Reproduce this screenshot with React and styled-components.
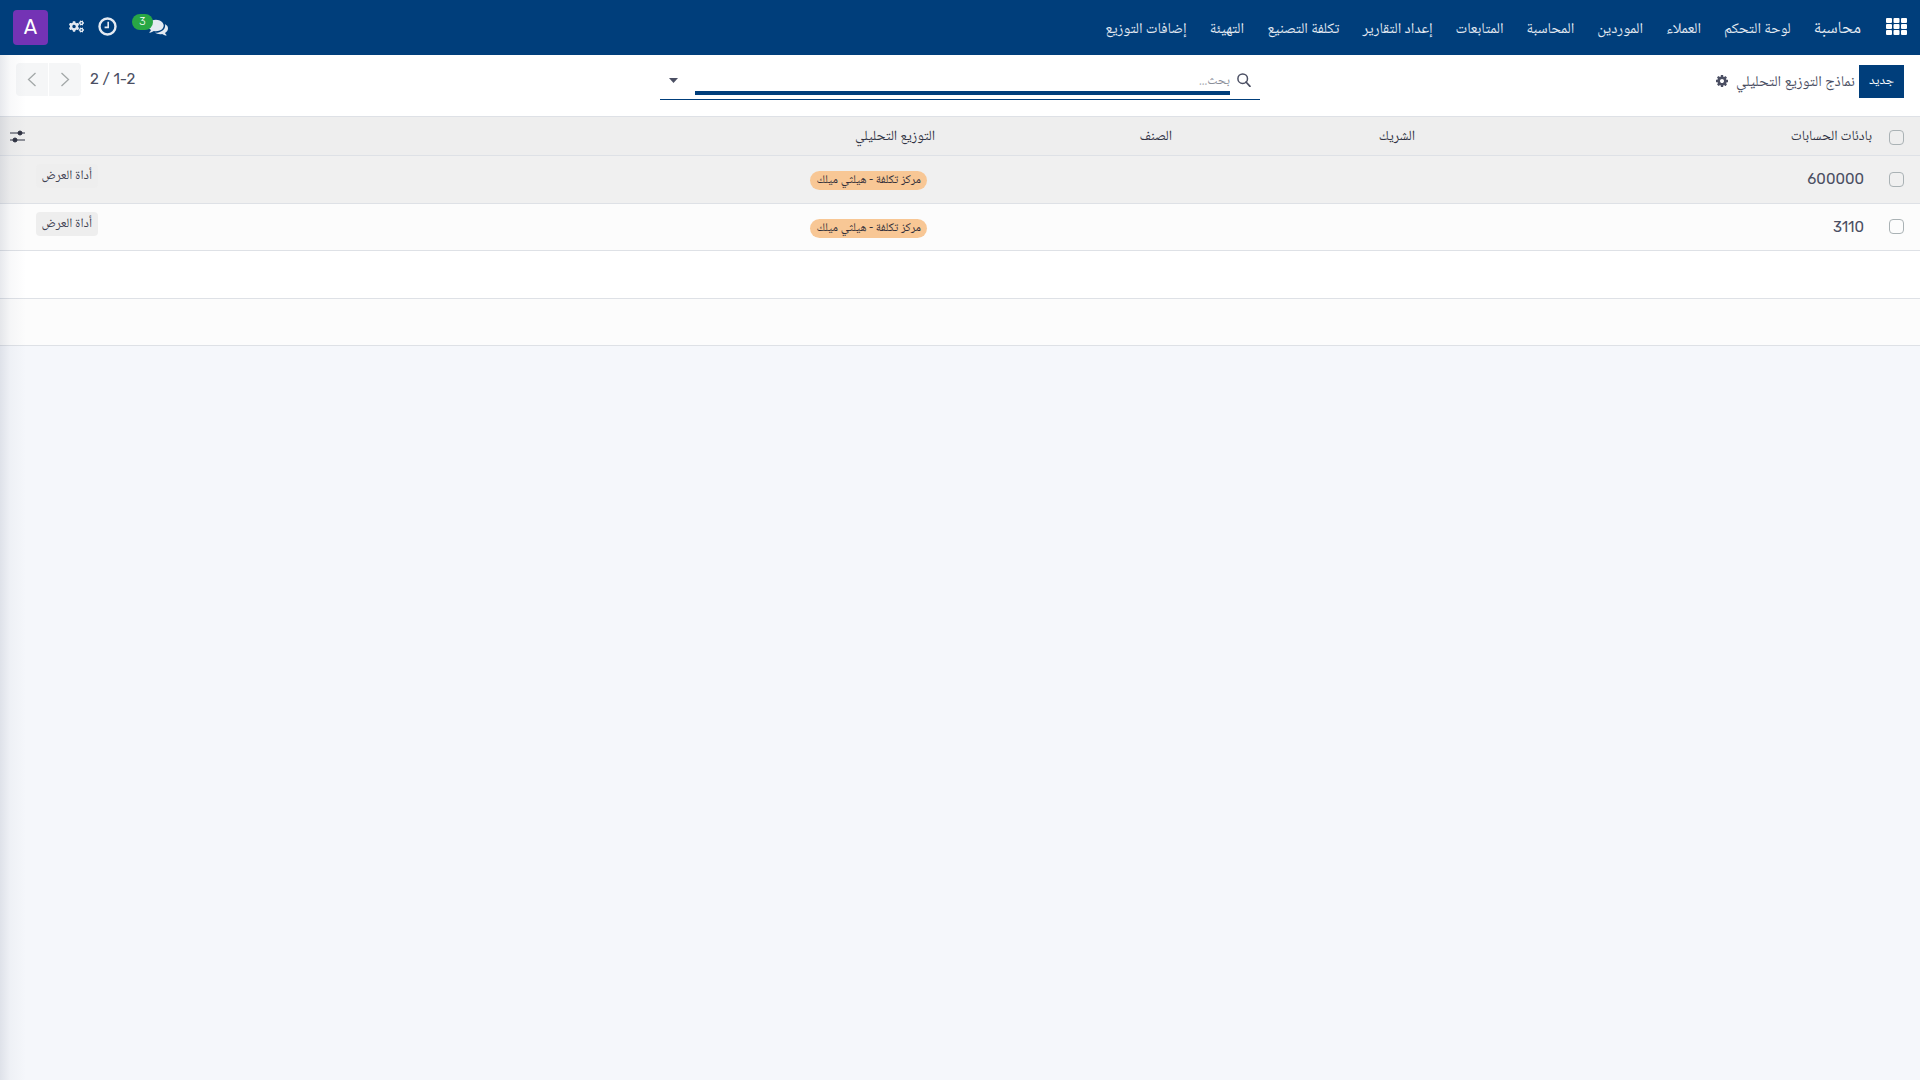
import React from "react";
import styled, { createGlobalStyle } from "styled-components";
import { FaCogs } from "react-icons/fa";

const arabic = `"Noto Naskh Arabic", "DejaVu Sans", sans-serif`;
const latin = `Rubik, Roboto, sans-serif`;
const navy = "#003e7b";
const ink = "#4b4f63";
const line = "#dee1e6";

const GlobalStyle = createGlobalStyle`
  *, *::before, *::after { box-sizing: border-box; }
  body { margin: 0; background: #f5f7fb; color: ${ink}; font-family: ${arabic}; font-size: 15px; line-height: 24px; }
  button, input { font: inherit; color: inherit; }
`;

const Page = styled.div`
  min-height: 100vh;
  display: flex;
  flex-direction: column;
`;

const Navbar = styled.header`
  display: flex;
  align-items: center;
  height: 55px;
  padding: 0 13px;
  background: ${navy};
  color: #e4eaf2;
`;

const IconButton = styled.button`
  display: flex;
  align-items: center;
  justify-content: center;
  padding: 0;
  border: 0;
  background: none;
  color: inherit;
  cursor: pointer;
`;

const AppsButton = styled(IconButton)`
  padding-bottom: 3px;
`;

const Menu = styled.nav`
  display: flex;
  align-items: center;
  gap: 23px;
  padding-top: 4px;
  margin-inline-start: 25px;
`;

const MenuLink = styled.a`
  color: inherit;
  text-decoration: none;
  white-space: nowrap;
  font-size: ${(p) => (p.$brand ? 17 : 15)}px;
  line-height: 24px;
`;

const Systray = styled.div`
  display: flex;
  align-items: center;
  margin-inline-start: auto;
`;

const Tray = styled.div`
  display: flex;
  align-items: center;
  gap: 14px;
  height: 35px;
  padding-bottom: 2px;
  margin-inline-end: 21px;
`;

const Messages = styled(IconButton)`
  position: relative;
  margin-inline-end: 17px;
`;

const Badge = styled.span`
  position: absolute;
  top: -3px;
  left: -16px;
  width: 21px;
  height: 16px;
  border-radius: 8px;
  background: #28a745;
  color: #fff;
  font: 300 11px/15px ${latin};
  text-align: center;
`;

const Avatar = styled.button`
  width: 35px;
  height: 35px;
  padding: 0;
  border: 0;
  border-radius: 4px;
  background: #7433b5;
  color: #fff;
  font: 400 20px/35px ${latin};
`;

const ControlPanel = styled.section`
  display: grid;
  grid-template-columns: 1fr 600px 1fr;
  align-items: start;
  height: 62px;
  padding: 8px 16px 0;
  background: #fff;
  border-bottom: 1px solid ${line};
`;

const Crumbs = styled.div`
  display: flex;
  align-items: center;
  gap: 4px;
  padding-top: 2px;
`;

const NewButton = styled.button`
  height: 33px;
  padding: 0 10px;
  border: 0;
  background: ${navy};
  color: #fff;
  font-size: 13px;
  line-height: 33px;
`;

const Title = styled.h1`
  margin: 0;
  padding-top: 3px;
  font-size: 15px;
  font-weight: 400;
  line-height: 30px;
`;

const Gear = styled(IconButton)`
  margin-inline-start: 3px;
  padding-bottom: 2px;
`;

const Search = styled.div`
  display: flex;
  align-items: flex-start;
  height: 37px;
  padding: 8px 9px 0;
  border-bottom: 1px solid ${navy};
`;

const SearchAction = styled(IconButton)`
  height: 18px;
`;

const SearchInput = styled.input`
  flex: 1;
  height: 24px;
  min-width: 0;
  margin-inline: 7px 17px;
  padding: 0;
  border: 0;
  border-bottom: 4px solid ${navy};
  border-radius: 0;
  outline: 0;
  background: none;
  font-size: 13px;
  line-height: 20px;
  &::placeholder { color: #8b8f99; opacity: 1; }
`;

const Pager = styled.div`
  display: flex;
  align-items: flex-start;
  justify-self: end;
  direction: ltr;
`;

const PagerButton = styled.button`
  display: flex;
  align-items: center;
  justify-content: center;
  width: 33px;
  height: 33px;
  padding: 0;
  border: 0;
  border-inline-end: 1px solid #fff;
  border-radius: ${(p) => (p.$last ? "0 4px 4px 0" : "4px 0 0 4px")};
  background: #f5f6f7;
  color: #a3a8a8;
`;

const Range = styled.span`
  padding-inline-start: 8px;
  font: 400 15px/32px ${latin};
`;

const Table = styled.table`
  width: 100%;
  table-layout: fixed;
  border-collapse: collapse;
  background: #fff;
`;

const Col = styled.col`
  width: ${(p) => p.$w};
`;

const Th = styled.th`
  height: 38px;
  padding: 3px 8px 0;
  border-bottom: 1px solid ${line};
  background: #eee;
  color: #2f3242;
  font-size: 14px;
  font-weight: 400;
  line-height: 24px;
  text-align: start;
`;

const TickTh = styled(Th)`
  padding: 3px 16px 0 8px;
`;

const OptionsTh = styled(Th)`
  padding: 2px 8px 0 10px;
`;

const OptionsButton = styled(IconButton)`
  margin-inline-start: auto;
`;

const Row = styled.tr`
  height: ${(p) => (p.$tall ? 48 : 47)}px;
  background: ${(p) => p.$bg};
  border-bottom: 1px solid ${line};
`;

const Td = styled.td`
  padding: 0 16px;
  font: 400 15px/24px ${latin};
  vertical-align: middle;
`;

const TickCell = styled(Td)`
  padding: 0 16px 0 8px;
`;

const ToolCell = styled(Td)`
  padding: 8px 8px 0 0;
  vertical-align: top;
`;

const Tick = styled.input`
  appearance: none;
  display: block;
  width: 15px;
  height: 15px;
  margin: 0;
  border: 1px solid #aab2b5;
  border-radius: 4px;
  background: transparent;
`;

const Tag = styled.span`
  display: block;
  width: fit-content;
  margin-top: 3px;
  padding: 0 6px;
  border-radius: 10px;
  background: #f8c795;
  color: #33303a;
  font: 12px/19px ${arabic};
  white-space: nowrap;
`;

const ViewButton = styled.button`
  display: block;
  height: 24px;
  padding: 0 6px;
  border: 0;
  border-radius: 4px;
  background: #eee;
  color: #3f4252;
  font: 13px/24px ${arabic};
  white-space: nowrap;
`;

const EdgeShade = styled.div`
  position: absolute;
  top: 55px;
  bottom: 0;
  left: 0;
  width: 26px;
  background: linear-gradient(to right, rgba(40, 55, 90, 0.11), rgba(40, 55, 90, 0.03) 40%, rgba(40, 55, 90, 0));
  pointer-events: none;
`;

const AppsIcon = () => (
  <svg width="21" height="17" viewBox="0 0 21 17" fill="#fff">
    {[0, 6, 12].map((y) =>
      [0, 7.5, 15].map((x) => <rect key={x + "-" + y} x={x} y={y} width="6" height="5" rx="1" />)
    )}
  </svg>
);

const ClockIcon = () => (
  <svg width="19" height="19" viewBox="0 0 19 19" fill="none" stroke="currentColor">
    <circle cx="9.5" cy="9.5" r="8" strokeWidth="2.4" />
    <path d="M10.2 4.8v5.6H6.6" strokeWidth="1.6" />
  </svg>
);

const CommentsIcon = () => (
  <svg width="20" height="20" viewBox="0 0 1792 1792" fill="currentColor">
    <path d="M1408 768q0 139-94 257t-256.5 186.5-353.5 68.5q-86 0-176-16-124 88-278 128-36 9-86 16h-3q-11 0-20.5-8t-11.5-21q-1-3-1-6.5t.5-6.5 2-6l2.5-5 3.5-5.5 4-5 4.5-5 4-4.5q5-6 23-25t26-29.5 22.5-29 25-38.5 20.5-44q-124-72-195-177t-71-224q0-139 94-257t256.500-186.500 353.500-68.500 353.500 68.500 256.500 186.500 94 257zm384 256q0 120-71 224.500t-195 176.500q10 24 20.500 44t25 38.500 22.500 29 26 29.500 23 25q1 1 4 4.500t4.500 5 4 5 3.500 5.500l2.500 5 2 6 .5 6.500-1 6.500q-3 14-13 22t-22 7q-50-7-86-16-154-40-278-128-90 16-176 16-271 0-472-132 58 4 88 4 161 0 309-45t264-129q125-92 192-212t67-254q0-77-23-152 129 71 204 178t75 230z" />
  </svg>
);

const GearIcon = () => (
  <svg width="14" height="14" viewBox="0 0 1792 1792" fill="currentColor">
    <path d="M1152 896q0-106-75-181t-181-75-181 75-75 181 75 181 181 75 181-75 75-181zm512-109v222q0 12-8 23t-20 13l-185 28q-19 54-39 91 35 50 107 138 10 12 10 25t-9 23q-27 37-99 108t-94 71q-12 0-26-9l-138-108q-44 23-91 38-16 136-29 186-7 28-36 28h-222q-14 0-24.500-8.500t-11.500-21.500l-28-184q-49-16-90-37l-141 107q-10 9-25 9-14 0-25-11-126-114-165-168-7-10-7-23 0-12 8-23 15-21 51-66.500t54-70.500q-27-50-41-99l-183-27q-13-2-21-12.500t-8-23.500v-222q0-12 8-23t19-13l186-28q14-46 39-92-40-57-107-138-10-12-10-24 0-10 9-23 26-36 98.500-107.500t94.500-71.500q13 0 26 10l138 107q44-23 91-38 16-136 29-186 7-28 36-28h222q14 0 24.500 8.500t11.500 21.500l28 184q49 16 90 37l142-107q9-9 24-9 13 0 25 10 129 119 165 170 7 8 7 22 0 12-8 23-15 21-51 66.500t-54 70.500q26 50 41 98l183 28q13 2 21 12.500t8 23.500z" />
  </svg>
);

const SearchIcon = () => (
  <svg width="14" height="14" viewBox="0 0 14 14" fill="none" stroke="currentColor">
    <circle cx="5.7" cy="5.7" r="4.8" strokeWidth="1.5" />
    <path d="M9 9l4 4.300" strokeWidth="1.700" strokeLinecap="round" />
  </svg>
);

const CaretIcon = () => (
  <svg width="9" height="15" viewBox="0 0 9 15" fill="currentColor">
    <path d="M0 5h9L4.500 10z" />
  </svg>
);

const Chevron = ({ d }) => (
  <svg width="10" height="15" viewBox="0 0 10 15" fill="none" stroke="currentColor" strokeWidth="1.300">
    <path d={d} />
  </svg>
);

const SlidersIcon = () => (
  <svg width="15" height="13" viewBox="0 0 15 13" fill="currentColor" stroke="currentColor">
    <path d="M0 3h15M0 10h15" fill="none" strokeWidth="1.200" />
    <circle cx="10" cy="3" r="2" />
    <circle cx="5" cy="10" r="2" />
  </svg>
);

const menus = ["لوحة التحكم", "العملاء", "الموردين", "المحاسبة", "المتابعات", "إعداد التقارير", "تكلفة التصنيع", "التهيئة", "إضافات التوزيع"];
const rows = [
  { code: "600000", bg: "#f0f0f0", tall: true },
  { code: "3110", bg: "#fcfcfc", tall: false },
];
const center = "مركز تكلفة - هيلثي ميلك";

export default function App() {
  return (
    <Page dir="rtl" lang="ar">
      <GlobalStyle />
      <Navbar>
        <AppsButton aria-label="التطبيقات"><AppsIcon /></AppsButton>
        <Menu>
          <MenuLink href="#" $brand>محاسبة</MenuLink>
          {menus.map((m) => <MenuLink key={m} href="#">{m}</MenuLink>)}
        </Menu>
        <Systray>
          <Tray>
            <Messages aria-label="الرسائل"><CommentsIcon /><Badge>3</Badge></Messages>
            <IconButton aria-label="الأنشطة"><ClockIcon /></IconButton>
            <IconButton aria-label="الإعدادات"><FaCogs size={15} /></IconButton>
          </Tray>
          <Avatar>A</Avatar>
        </Systray>
      </Navbar>
      <ControlPanel>
        <Crumbs>
          <NewButton>جديد</NewButton>
          <Title>نماذج التوزيع التحليلي</Title>
          <Gear aria-label="إجراءات"><GearIcon /></Gear>
        </Crumbs>
        <Search>
          <SearchAction aria-label="بحث"><SearchIcon /></SearchAction>
          <SearchInput type="text" placeholder="بحث..." aria-label="بحث..." />
          <SearchAction aria-label="خيارات البحث"><CaretIcon /></SearchAction>
        </Search>
        <Pager>
          <PagerButton aria-label="السابق"><Chevron d="M8.500 1L1.500 7.500l7 6.500" /></PagerButton>
          <PagerButton $last aria-label="التالي"><Chevron d="M1.500 1l7 6.500-7 6.500" /></PagerButton>
          <Range>2 / 1-2</Range>
        </Pager>
      </ControlPanel>
      <Table>
        <colgroup>
          <Col $w="40px" /><Col $w="23.8%" /><Col $w="12.65%" /><Col $w="12.35%" /><Col /><Col $w="71px" /><Col $w="35px" />
        </colgroup>
        <thead>
          <tr>
            <TickTh><Tick type="checkbox" aria-label="تحديد الكل" /></TickTh>
            <Th>بادئات الحسابات</Th>
            <Th>الشريك</Th>
            <Th>الصنف</Th>
            <Th>التوزيع التحليلي</Th>
            <Th />
            <OptionsTh><OptionsButton aria-label="الأعمدة"><SlidersIcon /></OptionsButton></OptionsTh>
          </tr>
        </thead>
        <tbody>
          {rows.map((r) => (
            <Row key={r.code} $bg={r.bg} $tall={r.tall}>
              <TickCell><Tick type="checkbox" aria-label={r.code} /></TickCell>
              <Td>{r.code}</Td>
              <Td />
              <Td />
              <Td><Tag>{center}</Tag></Td>
              <ToolCell><ViewButton>أداة العرض</ViewButton></ToolCell>
              <Td />
            </Row>
          ))}
          <Row $bg="#fff" $tall><td colSpan={7} /></Row>
          <Row $bg="#fcfcfc"><td colSpan={7} /></Row>
        </tbody>
      </Table>
      <EdgeShade />
    </Page>
  );
}
